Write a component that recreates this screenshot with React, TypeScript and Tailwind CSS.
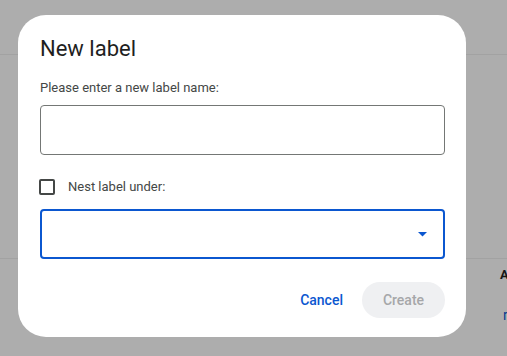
import React from "react";

export default function App() {
  return (
    <div
      className="relative w-[507px] h-[356px] overflow-hidden bg-[#adadad]"
      style={{ fontFamily: "Roboto, 'Noto Sans', Arial, sans-serif" }}
    >
      {/* background page content under the scrim */}
      <div className="absolute left-0 right-0 top-[54px] h-px bg-[#a2a2a2]" />
      <div className="absolute left-0 right-0 top-[258px] h-px bg-[#a2a2a2]" />
      <span className="absolute left-[500px] top-[267px] text-[13px] leading-[16px] font-bold text-[#151515]">
        A
      </span>
      <span className="absolute left-[503px] top-[306px] text-[14px] leading-[18px] text-[#073b8d]">
        r
      </span>

      {/* dialog */}
      <div className="absolute left-[18px] top-[15px] w-[448px] h-[322px] bg-white rounded-[28px] pl-[22px] pr-[21px] pt-[20px] flex flex-col">
        <h1 className="text-[22px] leading-[28px] h-[28px] text-[#1f1f1f] font-normal">
          New label
        </h1>
        <div className="mt-[15px] text-[13px] leading-[20px] text-[#444746]">
          Please enter a new label name:
        </div>
        <div className="mt-[7px] h-[50px] border border-[#747775] rounded-[4px]" />
        <div className="mt-[24px] flex items-center h-[16px]">
          <div className="ml-[-1px] w-[16px] h-[16px] border-2 border-[#444746] rounded-[2px]" />
          <span className="ml-[13px] text-[13px] leading-[20px] text-[#444746]">
            Nest label under:
          </span>
        </div>
        <div className="mt-[14px] h-[50px] border-2 border-[#0b57d0] rounded-[4px] flex items-center justify-end pr-[16px]">
          <svg width="9" height="5" viewBox="0 0 9 5">
            <polygon points="0,0 9,0 4.5,4.5" fill="#0b57d0" />
          </svg>
        </div>
        <div className="mt-[23px] flex justify-end items-center">
          <button className="h-[36px] px-[12px] mr-[7px] text-[14px] font-medium text-[#0b57d0]">
            Cancel
          </button>
          <button className="h-[36px] w-[83px] rounded-full bg-[#eff0f2] text-[14px] font-medium text-[#a6a7a9]">
            Create
          </button>
        </div>
      </div>
    </div>
  );
}
